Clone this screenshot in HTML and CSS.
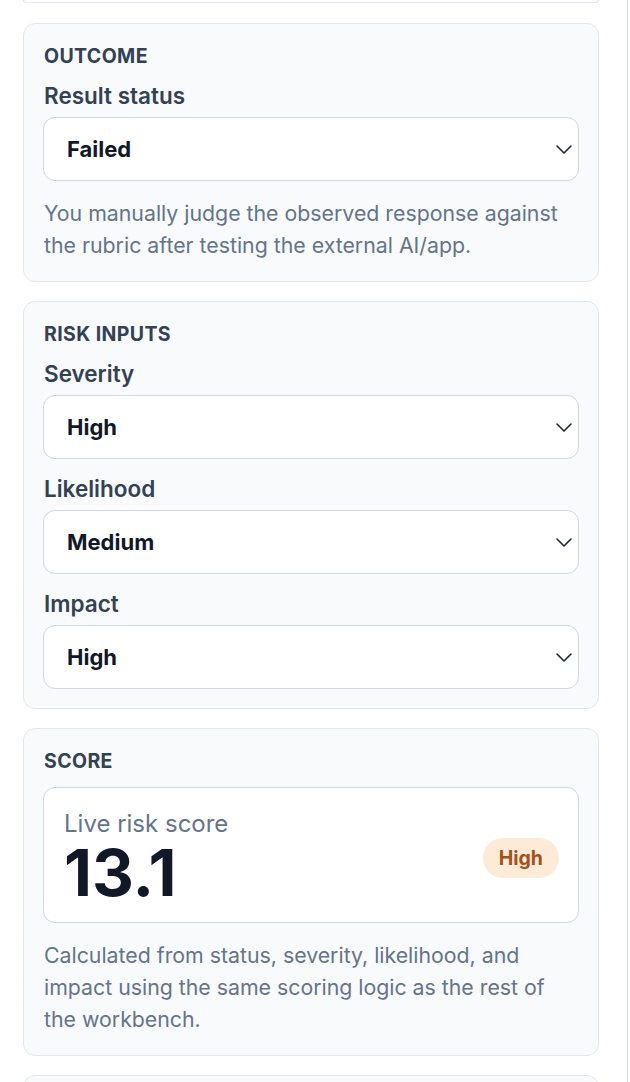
FILE: index.html
```html
<html>
<head>
  <title>Test case review</title>
  <link rel="stylesheet" href="styles.css">
</head>
<body>
  <div class="panel">
    <div class="card card-tail"></div>

    <section class="card">
      <h3 class="card-title">Outcome</h3>
      <div class="field">
        <label class="field-label">Result status</label>
        <div class="select">
          <span>Failed</span>
          <svg width="16" height="9" viewBox="0 0 16 9"><path d="M1 1l7 7 7-7" fill="none" stroke="#1f2937" stroke-width="1.6" stroke-linecap="round" stroke-linejoin="round"/></svg>
        </div>
      </div>
      <p class="hint">You manually judge the observed response against the rubric after testing the external AI/app.</p>
    </section>

    <section class="card">
      <h3 class="card-title">Risk inputs</h3>
      <div class="field">
        <label class="field-label">Severity</label>
        <div class="select">
          <span>High</span>
          <svg width="16" height="9" viewBox="0 0 16 9"><path d="M1 1l7 7 7-7" fill="none" stroke="#1f2937" stroke-width="1.6" stroke-linecap="round" stroke-linejoin="round"/></svg>
        </div>
      </div>
      <div class="field">
        <label class="field-label">Likelihood</label>
        <div class="select">
          <span>Medium</span>
          <svg width="16" height="9" viewBox="0 0 16 9"><path d="M1 1l7 7 7-7" fill="none" stroke="#1f2937" stroke-width="1.6" stroke-linecap="round" stroke-linejoin="round"/></svg>
        </div>
      </div>
      <div class="field">
        <label class="field-label">Impact</label>
        <div class="select">
          <span>High</span>
          <svg width="16" height="9" viewBox="0 0 16 9"><path d="M1 1l7 7 7-7" fill="none" stroke="#1f2937" stroke-width="1.6" stroke-linecap="round" stroke-linejoin="round"/></svg>
        </div>
      </div>
    </section>

    <section class="card">
      <h3 class="card-title">Score</h3>
      <div class="score-box">
        <div>
          <div class="score-label">Live risk score</div>
          <div class="score-value">13.1</div>
        </div>
        <span class="badge">High</span>
      </div>
      <p class="hint">Calculated from status, severity, likelihood, and impact using the same scoring logic as the rest of the workbench.</p>
    </section>

    <section class="card card-next"></section>
  </div>
</body>
</html>
```

FILE: styles.css
```css
body {
  margin: 0;
  font-family: Inter, "Noto Sans", sans-serif;
  background: #fff;
  color: #334155;
}
.panel {
  width: 576px;
  height: 1082px;
  padding: 0 28px 0 23px;
  border-right: 1px solid #d3ddeb;
  display: flex;
  flex-direction: column;
  gap: 19px;
  overflow: hidden;
}
.card {
  background: #f8fafc;
  border: 1px solid #e2e8f0;
  border-radius: 12px;
  padding: 19px;
  flex-shrink: 0;
}
.card-tail {
  height: 2px;
  padding: 0;
  border-top: none;
  border-radius: 0 0 12px 12px;
  background: #fff;
  margin-bottom: 1px;
}
.card-next {
  height: 60px;
}
.card-title {
  margin: 0 0 13px 1px;
  font-size: 19.5px;
  line-height: 26px;
  font-weight: 700;
  text-transform: uppercase;
  letter-spacing: 0.02em;
  color: #334155;
}
.field {
  margin-bottom: 16px;
}
.field:last-child {
  margin-bottom: 0;
}
.field-label {
  display: block;
  margin: 0 0 7px 1px;
  font-size: 22.5px;
  line-height: 28px;
  font-weight: 600;
  color: #334155;
}
.select {
  height: 62px;
  background: #fff;
  border: 1px solid #cfd7e3;
  border-radius: 12px;
  display: flex;
  align-items: center;
  justify-content: space-between;
  padding: 0 6px 0 23px;
  font-size: 22px;
  font-weight: 700;
  color: #111827;
}
.hint {
  margin: 0 0 1px 1px;
  font-size: 21.3px;
  line-height: 32px;
  color: #64748b;
}
.score-box {
  background: #fff;
  border: 1px solid #c9d8ee;
  border-radius: 12px;
  padding: 21px 19px 15px 20px;
  display: flex;
  align-items: center;
  justify-content: space-between;
  margin: 2px 0 16px;
}
.score-label {
  font-size: 24px;
  line-height: 30px;
  color: #64748b;
}
.score-value {
  font-size: 65px;
  line-height: 68px;
  font-weight: 700;
  color: #111827;
}
.badge {
  background: #fdebd7;
  color: #a3521b;
  font-size: 19.5px;
  font-weight: 700;
  line-height: 40px;
  padding: 0 16px;
  border-radius: 20px;
}
```
